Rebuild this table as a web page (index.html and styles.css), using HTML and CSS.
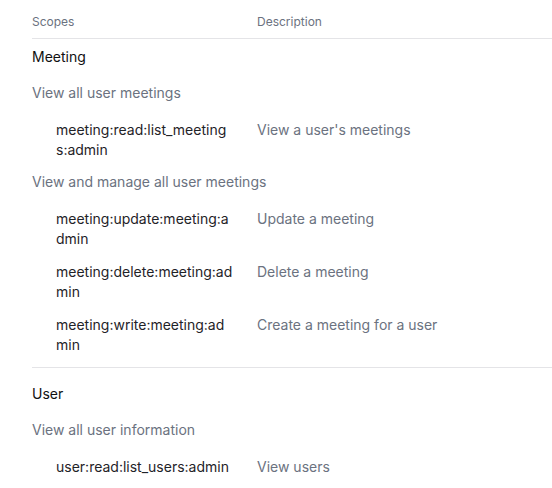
FILE: index.html
```html
<!DOCTYPE html>
<html lang="en">
<head>
<meta charset="utf-8">
<title>Scopes</title>
<link rel="stylesheet" href="styles.css">
</head>
<body>
<div class="page">
  <div class="table">
    <div class="thead">
      <div class="th th-scope">Scopes</div>
      <div class="th">Description</div>
    </div>

    <section class="group">
      <div class="group-title">Meeting</div>
      <div class="subgroups">
        <div class="subgroup">
          <div class="sub-label">View all user meetings</div>
          <div class="row">
            <div class="scope"><span class="scope-text">meeting:read:list_meetings:admin</span></div>
            <div class="desc">View a user's meetings</div>
          </div>
        </div>
        <div class="subgroup">
          <div class="sub-label">View and manage all user meetings</div>
          <div class="row">
            <div class="scope"><span class="scope-text">meeting:update:meeting:admin</span></div>
            <div class="desc">Update a meeting</div>
          </div>
          <div class="row">
            <div class="scope"><span class="scope-text">meeting:delete:meeting:admin</span></div>
            <div class="desc">Delete a meeting</div>
          </div>
          <div class="row">
            <div class="scope"><span class="scope-text">meeting:write:meeting:admin</span></div>
            <div class="desc">Create a meeting for a user</div>
          </div>
        </div>
      </div>
    </section>

    <section class="group">
      <div class="group-title">User</div>
      <div class="subgroups">
        <div class="subgroup">
          <div class="sub-label">View all user information</div>
          <div class="row">
            <div class="scope"><span class="scope-text">user:read:list_users:admin</span></div>
            <div class="desc">View users</div>
          </div>
        </div>
      </div>
    </section>
  </div>
</div>
</body>
</html>
```

FILE: styles.css
```css
html, body {
  margin: 0;
  padding: 0;
  background: #ffffff;
  overflow: hidden;
}

body {
  font-family: Inter, "Noto Sans", "Liberation Sans", sans-serif;
  font-size: 14px;
  line-height: 20px;
  color: #1f2328;
}

.page {
  padding-left: 32px;
}

.thead {
  display: grid;
  grid-template-columns: 225px 1fr;
  padding: 14px 0 8px;
  border-bottom: 1px solid #e4e4e7;
  font-size: 12px;
  line-height: 16px;
  color: #6b7280;
}

.group {
  padding: 16px 0 12px;
  border-bottom: 1px solid #e4e4e7;
}

.group:first-of-type {
  padding-top: 8px;
}

.group:last-of-type {
  border-bottom: none;
}

.group-title {
  color: #111111;
  padding-bottom: 16px;
}

.subgroups {
  display: flex;
  flex-direction: column;
  gap: 12px;
}

.subgroup {
  display: flex;
  flex-direction: column;
  gap: 13px;
}

.sub-label {
  color: #6b7280;
  margin-bottom: 4px;
}

.row {
  display: grid;
  grid-template-columns: 225px 1fr;
}

.scope {
  padding-left: 24px;
}

.scope-text {
  display: block;
  width: 180px;
  word-break: break-all;
  color: #1f2328;
}

.desc {
  color: #6b7280;
}
```
